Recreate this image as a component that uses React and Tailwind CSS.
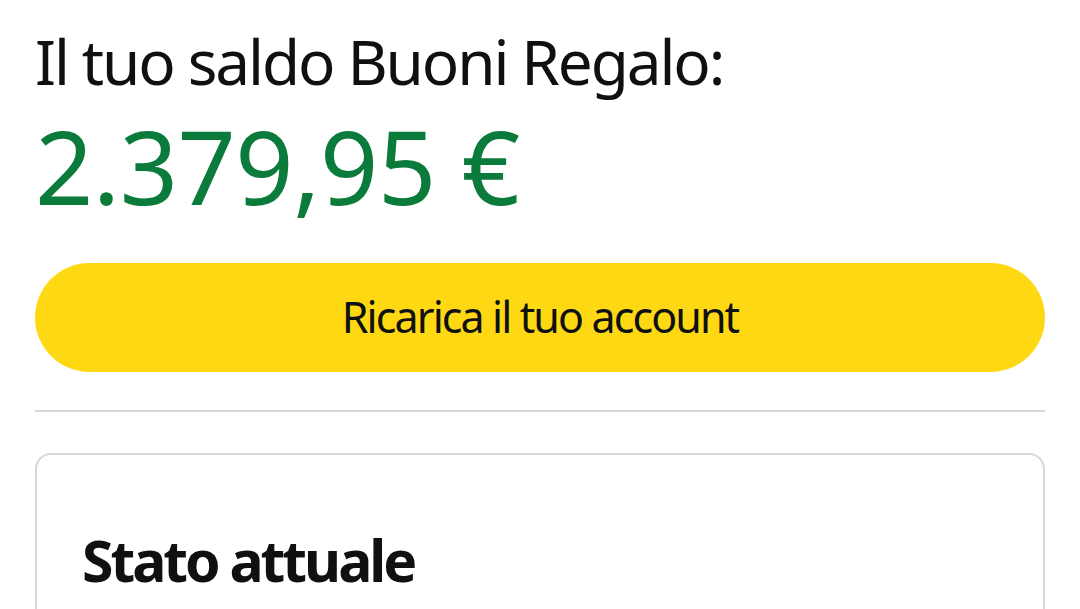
import React from 'react';

const font = { fontFamily: '"Noto Sans", "Open Sans", sans-serif' };

function BalanceHeader({ amount }) {
  return (
    <div>
      <h1 className="text-[62px] leading-[1.2] text-[#0f1111] tracking-[-2.1px]">
        Il tuo saldo Buoni Regalo:
      </h1>
      <p className="mt-[9px] text-[102px] leading-[1.15] text-[#0b7b3c] tracking-[-0.5px]">
        {amount}
      </p>
    </div>
  );
}

function StatusCard() {
  return (
    <div className="mt-[41px] rounded-[16px] border-2 border-[#d5d9d9] px-[45px] pt-[71px] pb-10">
      <h2 className="text-[57px] leading-[1.2] font-bold text-[#0f1111] tracking-[-3px]">
        Stato attuale
      </h2>
    </div>
  );
}

export default function App() {
  return (
    <div style={font} className="min-h-screen bg-white px-[35px] pt-[24px] overflow-hidden">
      <BalanceHeader amount="2.379,95 €" />

      <button className="mt-[38px] flex h-[109px] w-full items-center justify-center rounded-full bg-[#ffd814] text-[43px] text-[#0f1111] tracking-[-1.9px]">
        Ricarica il tuo account
      </button>

      <hr className="mt-[38px] border-t-2 border-[#d5d9d9]" />

      <StatusCard />
    </div>
  );
}
